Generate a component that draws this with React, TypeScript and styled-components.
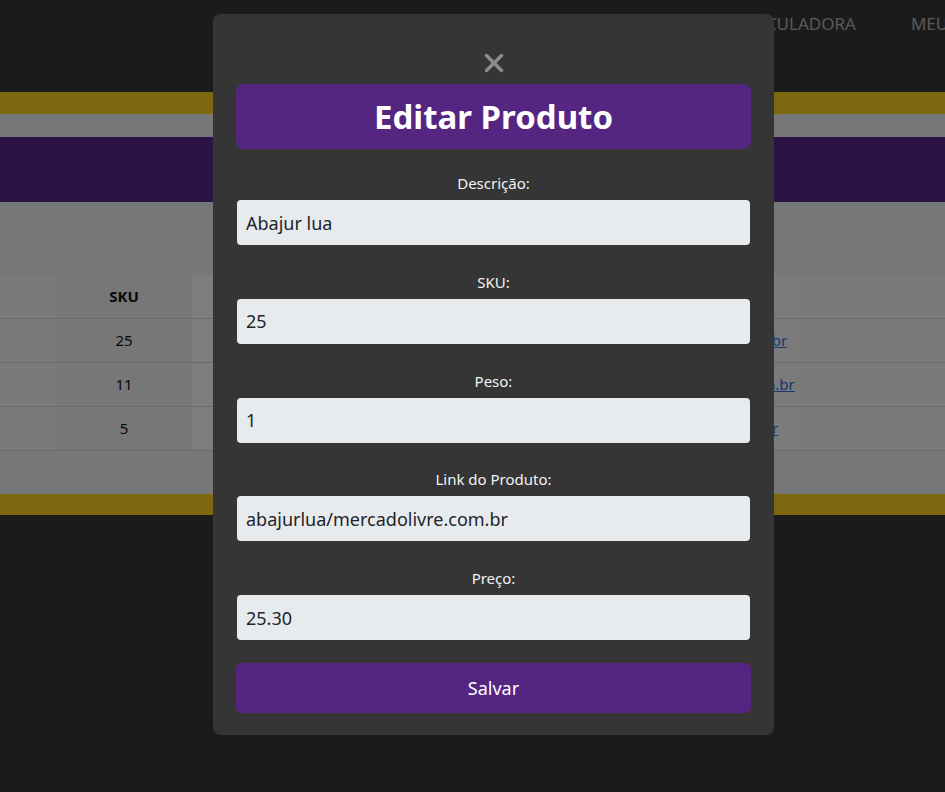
import styled, { createGlobalStyle } from "styled-components";
import { X } from "lucide-react";

const GlobalStyle = createGlobalStyle`
  body {
    margin: 0;
    background-color: #363636;
    font-family: "Noto Sans", "Open Sans", sans-serif;
  }
  * {
    box-sizing: border-box;
  }
`;

const Header = styled.header`
  height: 92px;
  display: flex;
  align-items: flex-start;
  overflow: hidden;
`;

const Nav = styled.nav`
  display: flex;
  column-gap: 55px;
  padding: 12px 0 0 590px;
  white-space: nowrap;
`;

const NavLink = styled.a`
  color: #b4b4b4;
  font-size: 17px;
  text-transform: uppercase;
  text-decoration: none;
`;

const Main = styled.main`
  background-color: #eceef0;
  border-top: 22px solid #fad020;
  border-bottom: 21px solid #fad020;
  padding: 23px 0 43px;
`;

const TitleBar = styled.div`
  height: 65px;
  background-color: #562886;
  margin-bottom: 73px;
`;

const Table = styled.table`
  width: 100%;
  border-collapse: collapse;
  font-size: 15px;
  color: #111;
`;

const Th = styled.th<{ $shade: string }>`
  height: 43px;
  font-weight: 700;
  background-color: ${({ $shade }) => $shade};
  border-bottom: 1px solid #d4d4d4;
`;

const Td = styled.td<{ $shade: string }>`
  height: 44px;
  text-align: center;
  white-space: nowrap;
  background-color: ${({ $shade }) => $shade};
  border-bottom: 1px solid #d4d4d4;
`;

const TableLink = styled.a`
  color: #2f6fe0;
  text-decoration: underline;
`;

const Overlay = styled.div`
  position: fixed;
  inset: 0;
  background-color: rgba(0, 0, 0, 0.5);
  display: flex;
  justify-content: center;
  align-items: flex-start;
  padding: 14px 0 0 42px;
`;

const Modal = styled.div`
  width: 561px;
  background-color: #353535;
  border-radius: 8px;
  padding: 41px 23px 22px;
  display: flex;
  flex-direction: column;
`;

const CloseButton = styled.button`
  align-self: center;
  display: flex;
  padding: 0;
  margin-bottom: 14px;
  border: none;
  background: none;
  color: #8c8c8c;
  cursor: pointer;
`;

const Title = styled.h2`
  margin: 0 0 24px;
  height: 65px;
  display: flex;
  align-items: center;
  justify-content: center;
  background-color: #542682;
  border-radius: 8px;
  color: #fff;
  font-size: 33px;
  font-weight: 700;
`;

const Form = styled.form`
  display: flex;
  flex-direction: column;
  row-gap: 26.75px;
`;

const Field = styled.div`
  display: flex;
  flex-direction: column;
  row-gap: 7px;
  padding: 0 1px;
`;

const Label = styled.label`
  text-align: center;
  color: #f2f2f2;
  font-size: 15px;
  line-height: 20px;
`;

const Input = styled.input`
  height: 45px;
  border: none;
  border-radius: 4px;
  background-color: #e8ebee;
  padding: 0 9px;
  font-family: inherit;
  font-size: 18px;
  color: #212529;
`;

const SaveButton = styled.button`
  margin-top: -3.75px;
  height: 50px;
  border: none;
  border-radius: 6px;
  background-color: #542682;
  color: #fff;
  font-family: inherit;
  font-size: 18px;
  cursor: pointer;
`;

const shades = ["#f4f4f4", "#eeeeee", "#fafafa", "#f4f4f4", "#f6f6f6", "#f4f4f4"];

const rows = [
  { sku: "25", peso: "1", link: "abajurlua/mercadolivre.com.br", preco: "25.30" },
  { sku: "11", peso: "2", link: "luminariasdesk/magazineluiza.br", preco: "40.00" },
  { sku: "5", peso: "1", link: "velaperfume/shopee.com.br", preco: "12.00" },
];

const fields = [
  { id: "descricao", label: "Descrição:", value: "Abajur lua" },
  { id: "sku", label: "SKU:", value: "25" },
  { id: "peso", label: "Peso:", value: "1" },
  { id: "link", label: "Link do Produto:", value: "abajurlua/mercadolivre.com.br" },
  { id: "preco", label: "Preço:", value: "25.30" },
];

function App() {
  return (
    <>
      <GlobalStyle />
      <Header>
        <Nav>
          <NavLink>Produtos</NavLink>
          <NavLink>Calculadora</NavLink>
          <NavLink>Meus dados</NavLink>
        </Nav>
      </Header>
      <Main>
        <TitleBar />
        <Table>
          <colgroup>
            <col style={{ width: 56 }} />
            <col style={{ width: 136 }} />
            <col style={{ width: 150 }} />
            <col style={{ width: 218 }} />
            <col style={{ width: 236 }} />
            <col />
          </colgroup>
          <thead>
            <tr>
              <Th $shade={shades[0]}></Th>
              <Th $shade={shades[1]}>SKU</Th>
              <Th $shade={shades[2]}>Peso</Th>
              <Th $shade={shades[3]}>Preço</Th>
              <Th $shade={shades[4]}>Link</Th>
              <Th $shade={shades[5]}></Th>
            </tr>
          </thead>
          <tbody>
            {rows.map((r) => (
              <tr key={r.sku}>
                <Td $shade={shades[0]}></Td>
                <Td $shade={shades[1]}>{r.sku}</Td>
                <Td $shade={shades[2]}>{r.peso}</Td>
                <Td $shade={shades[3]}>{r.preco}</Td>
                <Td $shade={shades[4]}>
                  <TableLink>{r.link}</TableLink>
                </Td>
                <Td $shade={shades[5]}></Td>
              </tr>
            ))}
          </tbody>
        </Table>
      </Main>
      <Overlay>
        <Modal>
          <CloseButton aria-label="Fechar">
            <X size={30} strokeWidth={2.8} style={{ margin: "-7.5px" }} />
          </CloseButton>
          <Title>Editar Produto</Title>
          <Form>
            {fields.map((f) => (
              <Field key={f.id}>
                <Label htmlFor={f.id}>{f.label}</Label>
                <Input id={f.id} defaultValue={f.value} />
              </Field>
            ))}
            <SaveButton type="button">Salvar</SaveButton>
          </Form>
        </Modal>
      </Overlay>
    </>
  );
}

export default App;
